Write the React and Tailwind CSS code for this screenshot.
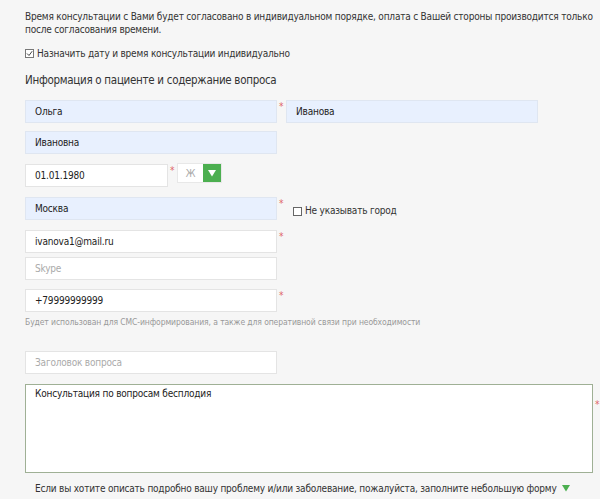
import React from 'react'

const font = { fontFamily: '"DejaVu Sans Condensed", "DejaVu Sans", sans-serif' }

function Star() {
  return <span className="w-[9px] shrink-0 text-[10px] leading-none text-[#e06666] pl-[2px] self-start mt-[2px]">*</span>
}

function Field({ value, placeholder, filled, w = 'w-[252px]' }) {
  return (
    <div
      className={`${w} h-[23px] shrink-0 flex items-center pl-[9px] text-[10px] tracking-[-0.2px] border ${
        filled ? 'bg-[#e8f0fe] border-[#dfe6f1]' : 'bg-white border-[#e4e4e4]'
      } ${value ? 'text-[#222]' : 'text-[#aaa]'}`}
    >
      {value || placeholder}
    </div>
  )
}

export default function App() {
  return (
    <div className="min-h-[499px] w-[600px] bg-[#f6f6f6] pl-[25px] pt-[10px] text-[#333] text-[10px] tracking-[-0.2px]" style={font}>
      <p className="leading-[13px] w-[570px] text-[#333]">
        Время консультации с Вами будет согласовано в индивидуальном порядке, оплата с Вашей стороны производится только после согласования времени.
      </p>

      <div className="flex items-center mt-[10px] h-[14px]">
        <span className="w-[9px] h-[9px] border border-[#777] bg-white flex items-center justify-center mr-[3px]">
          <svg width="7" height="7" viewBox="0 0 7 7"><path d="M1 3.5 L3 5.5 L6.2 1.2" stroke="#444" strokeWidth="1" fill="none" /></svg>
        </span>
        Назначить дату и время консультации индивидуально
      </div>

      <h2 className="text-[11.5px] tracking-[-0.3px] leading-[16px] mt-[12px] text-[#333]">Информация о пациенте и содержание вопроса</h2>

      <div className="flex mt-[12px]">
        <Field value="Ольга" filled />
        <Star />
        <Field value="Иванова" filled />
      </div>

      <div className="flex mt-[8px]">
        <Field value="Ивановна" filled />
      </div>

      <div className="flex mt-[10px]">
        <Field value="01.01.1980" w="w-[143px]" />
        <Star />
        <div className="mt-[-1px] flex h-[20px] border border-[#e8e8e8] bg-white">
          <span className="w-[25px] flex items-center justify-center text-[#aaa]">Ж</span>
          <span className="w-[18px] bg-[#4caf50] flex items-center justify-center">
            <svg width="8" height="7" viewBox="0 0 8 7"><path d="M0 0 H8 L4 6.5 Z" fill="#fff" /></svg>
          </span>
        </div>
      </div>

      <div className="flex mt-[10px]">
        <Field value="Москва" filled />
        <Star />
        <div className="flex items-center ml-[7px] mt-[7px] h-[12px] text-[#333] self-start">
          <span className="w-[9px] h-[9px] border border-[#666] bg-white mr-[3px] mt-[3px]" />
          Не указывать город
        </div>
      </div>

      <div className="flex mt-[10px]">
        <Field value="ivanova1@mail.ru" />
        <Star />
      </div>

      <div className="flex mt-[4px]">
        <Field placeholder="Skype" />
      </div>

      <div className="flex mt-[9px]">
        <Field value="+79999999999" />
        <Star />
      </div>

      <p className="text-[8.5px] tracking-[-0.1px] leading-[12px] mt-[4px] text-[#999]">
        Будет использован для СМС-информирования, а также для оперативной связи при необходимости
      </p>

      <div className="flex mt-[23px]">
        <Field placeholder="Заголовок вопроса" />
      </div>

      <div className="flex mt-[10px]">
        <div className="w-[568px] h-[89px] border border-[#9fb095] bg-white pl-[9px] pt-[1px] text-[#222]">
          Консультация по вопросам бесплодия
        </div>
        <span className="text-[10px] leading-none text-[#e06666] pl-[2px] mt-[16px]">*</span>
      </div>

      <div className="flex items-center mt-[8px] pl-[10px] text-[#333] whitespace-nowrap">
        Если вы хотите описать подробно вашу проблему и/или заболевание, пожалуйста, заполните небольшую форму
        <svg className="ml-[5px] shrink-0" width="8" height="7" viewBox="0 0 8 7"><path d="M0 0 H8 L4 6.5 Z" fill="#4caf50" /></svg>
      </div>
    </div>
  )
}
